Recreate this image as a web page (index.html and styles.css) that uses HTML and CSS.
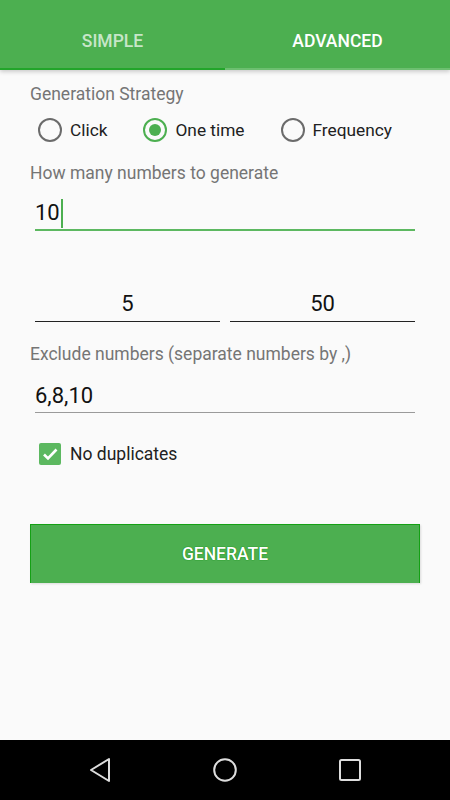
FILE: index.html
```html
<!DOCTYPE html>
<html lang="en">
<head>
    <meta charset="UTF-8">
    <meta name="viewport" content="width=device-width, initial-scale=1.0">
    <title>Random Numbers</title>
    <link rel="stylesheet" href="styles.css">
</head>
<body>
    <div class="app">
        <header class="tabs">
            <div class="tab-row">
                <div class="tab">SIMPLE</div>
                <div class="tab active">ADVANCED</div>
            </div>
            <div class="indicator">
                <div class="line-left"></div>
                <div class="line-right"></div>
            </div>
        </header>

        <main class="content">
            <div class="label first">Generation Strategy</div>
            <div class="radios">
                <div class="radio-option">
                    <span class="radio"></span>
                    <span>Click</span>
                </div>
                <div class="radio-option">
                    <span class="radio checked"></span>
                    <span>One time</span>
                </div>
                <div class="radio-option">
                    <span class="radio"></span>
                    <span>Frequency</span>
                </div>
            </div>

            <div class="label second">How many numbers to generate</div>
            <div class="field focused">10<span class="cursor"></span></div>

            <div class="range">
                <div class="field range-field">5</div>
                <div class="field range-field">50</div>
            </div>

            <div class="label third">Exclude numbers (separate numbers by ,)</div>
            <div class="field exclude">6,8,10</div>

            <div class="check-row">
                <span class="checkbox">
                    <svg width="22" height="22" viewBox="0 0 22 22">
                        <path d="M5 11.5 L9 15.5 L17.5 6.5" fill="none" stroke="#fff" stroke-width="2.6"/>
                    </svg>
                </span>
                <span>No duplicates</span>
            </div>

            <button class="generate">GENERATE</button>
        </main>

        <nav class="navbar">
            <svg width="24" height="26" viewBox="0 0 24 26">
                <path d="M21 2 L21 24 L3 13 Z" fill="none" stroke="#ddd" stroke-width="2" stroke-linejoin="round"/>
            </svg>
            <svg width="26" height="26" viewBox="0 0 26 26">
                <circle cx="13" cy="13" r="10.8" fill="none" stroke="#ddd" stroke-width="2"/>
            </svg>
            <svg width="24" height="24" viewBox="0 0 24 24">
                <rect x="2" y="2" width="20" height="20" rx="1.5" fill="none" stroke="#ddd" stroke-width="2"/>
            </svg>
        </nav>
    </div>
</body>
</html>
```

FILE: styles.css
```css
body {
    margin: 0;
    font-family: Roboto, "Liberation Sans", sans-serif;
    background-color: #fafafa;
}

.app {
    display: flex;
    flex-direction: column;
    height: 800px;
}

.tabs {
    background-color: #4caf50;
    box-shadow: 0 2px 4px rgba(0, 0, 0, 0.18);
    position: relative;
    z-index: 1;
}

.tab-row {
    display: flex;
    height: 68px;
}

.tab {
    flex: 1;
    display: flex;
    justify-content: center;
    align-items: center;
    padding-top: 13px;
    box-sizing: border-box;
    font-size: 17.5px;
    font-weight: 500;
    color: rgba(255, 255, 255, 0.7);
}

.tab.active {
    color: #fff;
}

.indicator {
    display: flex;
    height: 2px;
}

.line-left {
    flex: 1;
    background-color: #22a52a;
}

.line-right {
    flex: 1;
    background-color: #6dbf70;
}

.content {
    flex: 1;
    padding: 12px 35px 0 30px;
}

.label {
    font-size: 17.5px;
    line-height: 24px;
    color: #757575;
}

.radios {
    display: flex;
    align-items: center;
    gap: 36px;
    height: 48px;
    padding-left: 8px;
    font-size: 17.3px;
    color: #212121;
}

.radio-option {
    display: flex;
    align-items: center;
    gap: 8px;
}

.radio {
    width: 24px;
    height: 24px;
    box-sizing: border-box;
    border: 2.5px solid #6b6b6b;
    border-radius: 50%;
    display: flex;
    justify-content: center;
    align-items: center;
}

.radio.checked {
    border-color: #4caf50;
}

.radio.checked::after {
    content: "";
    width: 12px;
    height: 12px;
    border-radius: 50%;
    background-color: #4caf50;
}

.label.second {
    margin-top: 7px;
}

.field {
    margin-left: 5px;
    font-size: 22px;
    line-height: 30px;
    color: #111;
    border-bottom: 1px solid #222;
    padding-bottom: 1px;
}

.field.focused {
    margin-top: 13px;
    border-bottom: 2px solid #5cb860;
    display: flex;
    align-items: center;
}

.cursor {
    display: inline-block;
    width: 2px;
    height: 29px;
    margin-left: 1px;
    background-color: #4caf50;
}

.range {
    display: flex;
    gap: 10px;
    margin-top: 58px;
    margin-left: 5px;
}

.range-field {
    flex: 1;
    margin-left: 0;
    text-align: center;
    padding-bottom: 2px;
}

.label.third {
    margin-top: 20px;
}

.field.exclude {
    margin-top: 15px;
    border-bottom: 1.5px solid #9a9a9a;
}

.check-row {
    display: flex;
    align-items: center;
    gap: 9px;
    height: 40px;
    margin-top: 21px;
    padding-left: 9px;
    font-size: 17.5px;
    color: #212121;
}

.checkbox {
    width: 22px;
    height: 22px;
    border-radius: 2px;
    background-color: #5cb860;
    display: flex;
}

.generate {
    display: block;
    width: 390px;
    height: 59px;
    margin-top: 50px;
    background-color: #4caf50;
    border: 1px solid #14a014;
    border-bottom: none;
    box-shadow: 1px 1px 2px rgba(0, 0, 0, 0.12);
    color: #fff;
    font-family: Roboto, "Liberation Sans", sans-serif;
    font-size: 17.5px;
    font-weight: 500;
    text-shadow: 0 0 1px #138a13, 0 0 1px #138a13;
    cursor: pointer;
}

.navbar {
    height: 60px;
    background-color: #000;
    display: flex;
    justify-content: center;
    align-items: center;
    gap: 100px;
}
```
